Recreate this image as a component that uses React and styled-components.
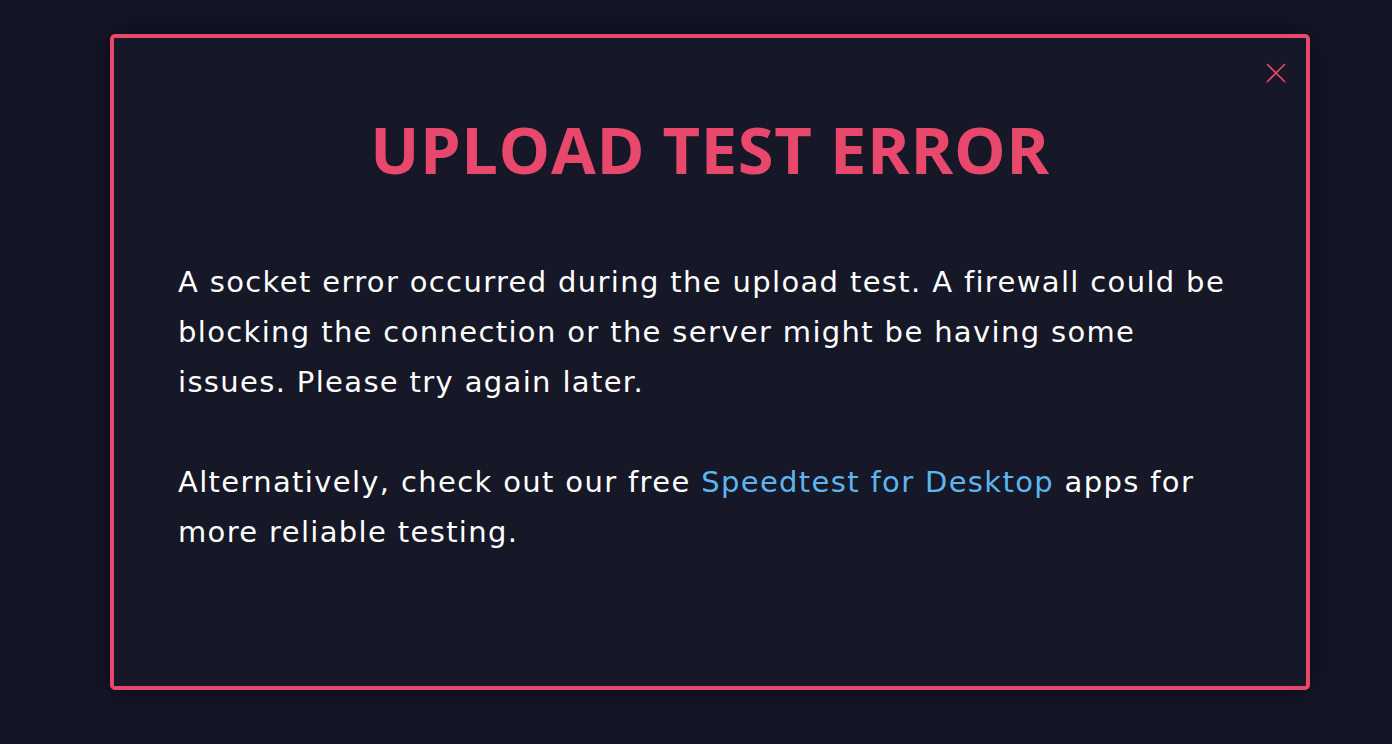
import React from 'react';
import styled, { createGlobalStyle } from 'styled-components';

const GlobalStyle = createGlobalStyle`
  html, body {
    margin: 0;
    padding: 0;
    background: #141526;
  }
  body {
    font-family: 'DejaVu Sans', 'Open Sans', sans-serif;
  }
`;

const Page = styled.div`
  width: 1392px;
  height: 744px;
  box-sizing: border-box;
  padding: 34px 0 0 110px;
  background: #141526;
`;

const Modal = styled.div`
  position: relative;
  box-sizing: border-box;
  width: 1200px;
  height: 656px;
  background: #161727;
  border: 4px solid #e8486b;
  border-radius: 5px;
  box-shadow: 0 0 30px rgba(0, 0, 0, 0.45);
  padding: 77px 64px 0;
`;

const CloseBtn = styled.button`
  position: absolute;
  top: 23px;
  right: 18px;
  width: 24px;
  height: 24px;
  padding: 0;
  border: none;
  background: transparent;
  cursor: pointer;
  display: flex;
  align-items: center;
  justify-content: center;
`;

const Title = styled.h1`
  margin: 0;
  text-align: center;
  color: #e8486b;
  font-family: 'Open Sans', sans-serif;
  font-size: 65px;
  font-weight: 700;
  line-height: 68px;
  letter-spacing: 0.6px;
`;

const Body = styled.div`
  margin-top: 74px;
  color: #ffffff;
  font-size: 29px;
  line-height: 50px;
  letter-spacing: 1.35px;
`;

const Para = styled.p`
  margin: 0 0 50px;
`;

const Link = styled.a`
  color: #5db5f1;
  text-decoration: none;
`;

const App = () => {
  return (
    <Page>
      <GlobalStyle />
      <Modal>
        <CloseBtn aria-label='Close'>
          <svg width='20' height='20' viewBox='0 0 20 20'>
            <path d='M1 1 L19 19 M19 1 L1 19' stroke='#e8486b' strokeWidth='1.6' />
          </svg>
        </CloseBtn>
        <Title>UPLOAD TEST ERROR</Title>
        <Body>
          <Para>
            A socket error occurred during the upload test. A firewall could be
            blocking the connection or the server might be having some issues.
            Please try again later.
          </Para>
          <Para>
            Alternatively, check out our free{' '}
            <Link href='#'>Speedtest for Desktop</Link> apps for more reliable
            testing.
          </Para>
        </Body>
      </Modal>
    </Page>
  );
};

export default App;
